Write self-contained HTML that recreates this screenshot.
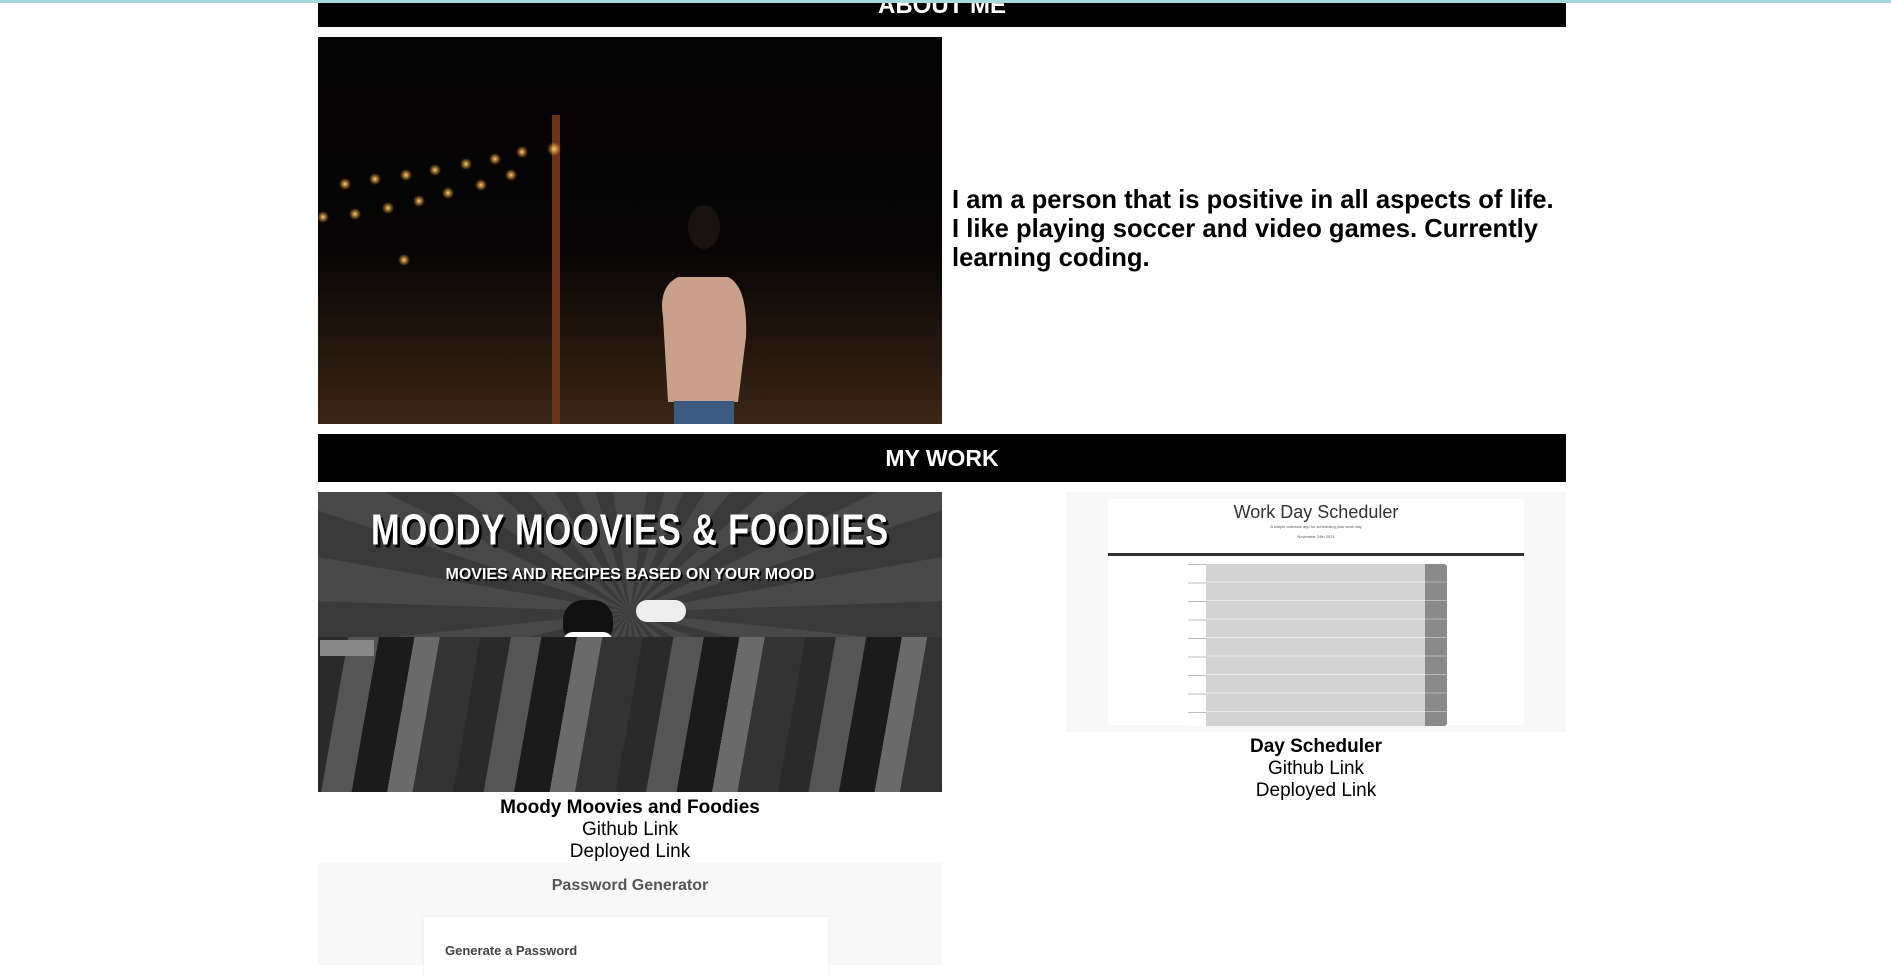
<!DOCTYPE html>
<html><head><meta charset="utf-8"><style>
body{margin:0;width:1891px;height:965px;overflow:hidden;background:#fff;font-family:"Liberation Sans",Arial,sans-serif;position:relative}
.a{position:absolute}
.bar{background:#000;color:#fff;font-weight:bold;text-align:center}
.cap{text-align:center;font-size:19px;line-height:22px;color:#000}
</style></head><body>
<div class="a" style="left:0;top:0;width:1891px;height:3px;background:#a9d8dc"></div>
<div class="a bar" style="left:318px;top:3px;width:1248px;height:24px;font-size:24px;line-height:6px;overflow:hidden">ABOUT ME</div>

<div class="a" style="left:318px;top:37px;width:624px;height:387px;overflow:hidden;background:linear-gradient(180deg,#050404 0%,#070505 55%,#1d130c 75%,#3a2616 100%)">
  <svg width="624" height="387" style="position:absolute;left:0;top:0">
    <defs><radialGradient id="g"><stop offset="0" stop-color="#ffd070"/><stop offset="1" stop-color="#ffa030" stop-opacity="0"/></radialGradient></defs>
    <rect x="234" y="78" width="8" height="309" fill="#6a3418"/>
    <g fill="url(#g)">
      <circle cx="27" cy="147" r="6"/><circle cx="57" cy="142" r="6"/><circle cx="88" cy="138" r="6"/><circle cx="117" cy="133" r="6"/><circle cx="148" cy="127" r="6"/><circle cx="177" cy="122" r="6"/><circle cx="204" cy="115" r="6"/><circle cx="236" cy="112" r="7"/>
      <circle cx="5" cy="180" r="6"/><circle cx="37" cy="177" r="6"/><circle cx="70" cy="171" r="6"/><circle cx="101" cy="164" r="6"/><circle cx="130" cy="156" r="6"/><circle cx="163" cy="148" r="6"/><circle cx="193" cy="138" r="6"/><circle cx="86" cy="223" r="6"/>
    </g>
    <ellipse cx="386" cy="190" rx="16" ry="22" fill="#1a1210"/>
    <path d="M345 280 Q340 250 360 240 L410 240 Q430 250 428 300 L420 365 L350 365 Z" fill="#c9a08c"/>
    <rect x="356" y="364" width="60" height="23" fill="#3a5a80"/>
  </svg>
</div>
<div class="a" style="left:952px;top:186px;width:612px;font-size:25.6px;font-weight:bold;line-height:29px;color:#000">I am a person that is positive in all aspects of life.<br>I like playing soccer and video games. Currently learning coding.</div>

<div class="a bar" style="left:318px;top:434px;width:1248px;height:48px;font-size:23px;line-height:48px">MY WORK</div>

<div class="a" style="left:318px;top:492px;width:624px;height:300px;overflow:hidden;background:#111">
  <div class="a" style="left:0;top:0;width:624px;height:145px;background:repeating-conic-gradient(from 0deg at 312px 120px,#484848 0 8deg,#3a3a3a 8deg 16deg)"></div>
  <div class="a" style="left:0;top:16px;width:624px;text-align:center;color:#fff;font-size:40px;font-weight:bold;letter-spacing:1px;text-shadow:3px 3px 0 #000;transform:scaleX(0.86) scaleY(1.1)">MOODY MOOVIES &amp; FOODIES</div>
  <div class="a" style="left:0;top:74px;width:624px;text-align:center;color:#fff;font-size:16px;font-weight:bold;text-shadow:2px 2px 0 #000">MOVIES AND RECIPES BASED ON YOUR MOOD</div>
  <div class="a" style="left:245px;top:108px;width:50px;height:46px;background:#111;border-radius:20px"></div>
  <div class="a" style="left:245px;top:140px;width:50px;height:20px;background:#fff;border-radius:10px"></div>
  <div class="a" style="left:318px;top:108px;width:50px;height:22px;background:#eee;border-radius:12px"></div>
  <div class="a" style="left:0;top:145px;width:624px;height:155px;background:repeating-linear-gradient(100deg,#2a2a2a 0 30px,#555 30px 60px,#1b1b1b 60px 95px,#6a6a6a 95px 120px,#333 120px 160px)"></div>
  <div class="a" style="left:2px;top:148px;width:54px;height:16px;background:#888"></div>
</div>
<div class="a cap" style="left:318px;top:797px;width:624px"><b>Moody Moovies and Foodies</b><br>Github Link<br>Deployed Link</div>

<div class="a" style="left:1066px;top:492px;width:500px;height:240px;background:#f8f8f8">
  <div class="a" style="left:42px;top:7px;width:416px;height:226px;background:#fff">
    <div class="a" style="left:0;top:3px;width:416px;text-align:center;font-size:18px;color:#333">Work Day Scheduler</div>
    <div class="a" style="left:0;top:25px;width:416px;text-align:center;font-size:4px;color:#555">A simple calendar app for scheduling your work day<br><br>November 24th 2021</div>
    <div class="a" style="left:0;top:54px;width:416px;height:3px;background:#333"></div>
  </div>
  <div class="a" style="left:122px;top:72px;width:18px;height:162px;background:repeating-linear-gradient(180deg,#bbb 0 1px,#fff 1px 18.5px)"></div>
  <div class="a" style="left:140px;top:72px;width:219px;height:162px;background:repeating-linear-gradient(180deg,#d3d3d3 0 17.5px,#e8e8e8 17.5px 18.5px)"></div>
  <div class="a" style="left:359px;top:72px;width:22px;height:162px;background:repeating-linear-gradient(180deg,#8a8a8a 0 17.5px,#bbb 17.5px 18.5px);border-radius:0 3px 3px 0"></div>
</div>
<div class="a cap" style="left:1066px;top:736px;width:500px"><b>Day Scheduler</b><br>Github Link<br>Deployed Link</div>

<div class="a" style="left:318px;top:863px;width:624px;height:102px;background:#f8f8f8">
  <div class="a" style="left:0;top:14px;width:624px;text-align:center;font-size:16px;font-weight:bold;color:#555">Password Generator</div>
  <div class="a" style="left:106px;top:54px;width:404px;height:60px;background:#fff;box-shadow:0 0 3px #e6e6e6"></div>
  <div class="a" style="left:127px;top:80px;font-size:13px;font-weight:bold;color:#444">Generate a Password</div>
</div>
</body></html>
